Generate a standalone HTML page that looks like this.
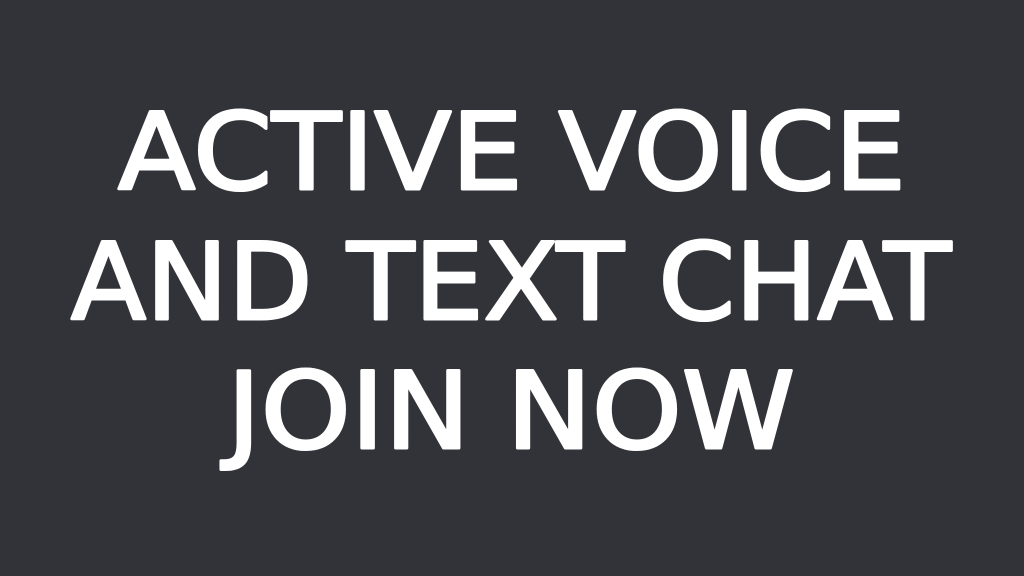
<!DOCTYPE html>
<html><head><meta charset="utf-8"><style>
html,body{margin:0;padding:0;width:1024px;height:576px;background:#323338;overflow:hidden}
svg{display:block}
text{font-family:"DejaVu Sans","Liberation Sans",sans-serif;font-size:106px;fill:#fff;stroke:#fff;stroke-width:3px;stroke-linejoin:round}
</style></head><body>
<svg width="1024" height="576" viewBox="0 0 1024 576">
<text x="512" y="189" text-anchor="middle" textLength="788" lengthAdjust="spacingAndGlyphs">ACTIVE VOICE</text>
<text x="511" y="319" text-anchor="middle" textLength="880" lengthAdjust="spacingAndGlyphs">AND TEXT CHAT</text>
<text x="511" y="448" text-anchor="middle" textLength="568" lengthAdjust="spacingAndGlyphs">JOIN NOW</text>
</svg>
</body></html>
